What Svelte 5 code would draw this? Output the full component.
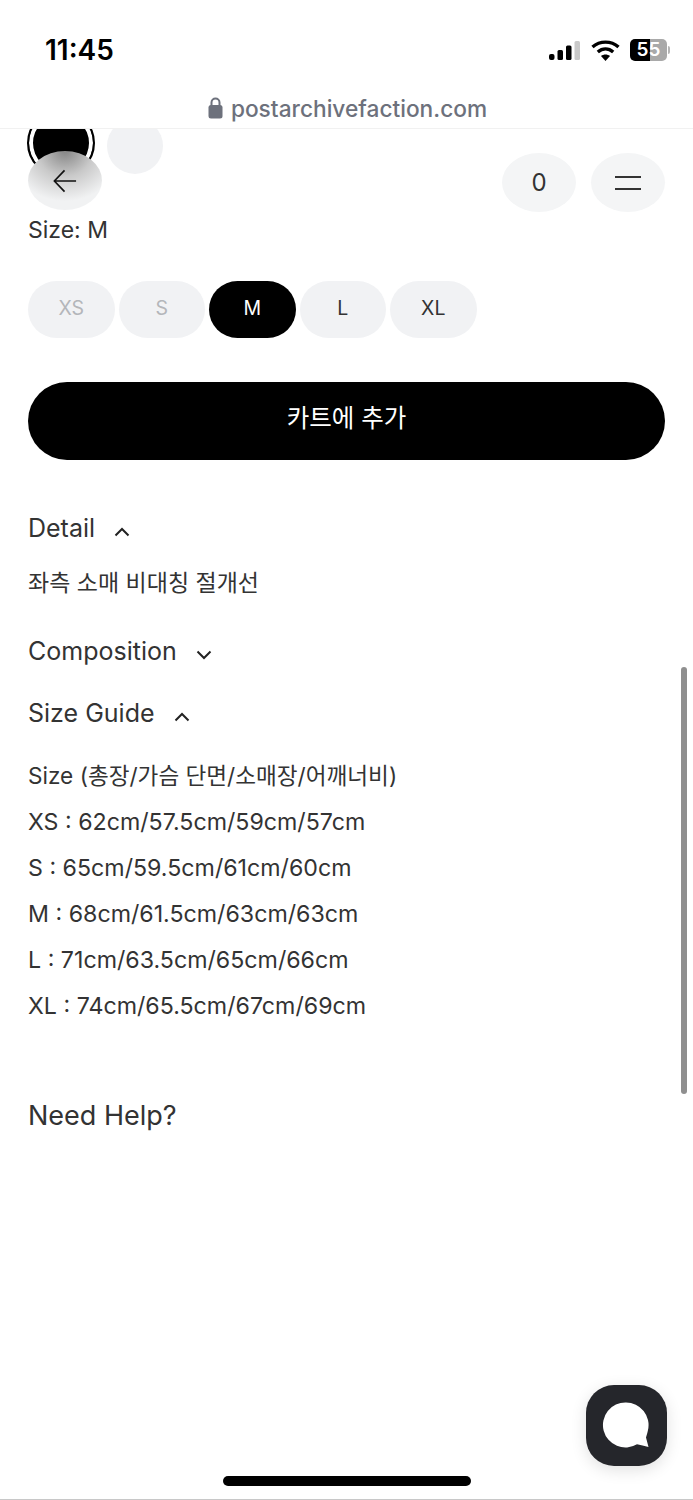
<script>
  const sizes = [
    { label: 'XS', state: 'off' },
    { label: 'S', state: 'off' },
    { label: 'M', state: 'selected' },
    { label: 'L', state: '' },
    { label: 'XL', state: '' }
  ];

  const guide = [
    'Size (총장/가슴 단면/소매장/어깨너비)',
    'XS : 62cm/57.5cm/59cm/57cm',
    'S : 65cm/59.5cm/61cm/60cm',
    'M : 68cm/61.5cm/63cm/63cm',
    'L : 71cm/63.5cm/65cm/66cm',
    'XL : 74cm/65.5cm/67cm/69cm'
  ];
</script>

<div class="screen">
  <div class="status">
    <span class="time">11:45</span>
    <div class="status-icons">
      <svg class="signal" width="32" height="19" viewBox="0 0 32 19">
        <rect x="0" y="13" width="5.500" height="6" rx="2" fill="#000" />
        <rect x="8.500" y="9" width="5.500" height="10" rx="1.500" fill="#000" />
        <rect x="17" y="4.500" width="5.500" height="14.500" rx="1.500" fill="#000" />
        <rect x="25.500" y="0" width="5.500" height="19" rx="1.500" fill="#c9c9c9" />
      </svg>
      <svg class="wifi" width="29" height="21" viewBox="0 0 29 21">
        <path d="M1.500 7C9 .5 20 .5 27.500 7" fill="none" stroke="#000" stroke-width="3.400" />
        <path d="M6.800 12C11.500 8 17.500 8 22.200 12" fill="none" stroke="#000" stroke-width="3.400" />
        <path d="M14.500 21L10 16C12.500 14 16.500 14 19 16Z" fill="#000" />
      </svg>
      <div class="battery">
        55
        <i class="nub"></i>
      </div>
    </div>
  </div>

  <div class="address">
    <svg width="15" height="22" viewBox="0 0 15 22">
      <path d="M3.500 9V5.500a4 4 0 0 1 8 0V9" fill="none" stroke="#6d717c" stroke-width="2" />
      <rect x="0.500" y="8" width="14" height="13.500" rx="2.500" fill="#6d717c" />
    </svg>
    <span>postarchivefaction.com</span>
  </div>

  <main class="page">
    <div class="swatches">
      <span class="swatch black"></span>
      <span class="swatch grey"></span>
    </div>

    <p class="size-label">Size: M</p>

    <div class="sizes">
      {#each sizes as s}
        <button class={s.state}>{s.label}</button>
      {/each}
    </div>

    <button class="cart">카트에 추가</button>

    <section class="detail">
      <h3>Detail <svg class="chev" viewBox="0 0 16 10"><path d="M1.500 8.500L8 2l6.500 6.500" /></svg></h3>
      <p class="kr">좌측 소매 비대칭 절개선</p>
    </section>

    <section class="composition">
      <h3>Composition <svg class="chev" viewBox="0 0 16 10"><path d="M1.500 1.500L8 8l6.500-6.500" /></svg></h3>
    </section>

    <section class="guide">
      <h3>Size Guide <svg class="chev" viewBox="0 0 16 10"><path d="M1.500 8.500L8 2l6.500 6.500" /></svg></h3>
      <div class="guide-lines">
        {#each guide as line}
          <p>{line}</p>
        {/each}
      </div>
    </section>

    <h3 class="help">Need Help?</h3>
  </main>

  <!-- floating header, sits over the page -->
  <button class="round back" aria-label="back">
    <svg width="24" height="24" viewBox="0 0 26 26">
      <path d="M25 13H2M12.500 1.500L1.500 13l11 11.500" fill="none" stroke="#111" stroke-width="1.800" />
    </svg>
  </button>
  <button class="round count">0</button>
  <button class="round menu" aria-label="menu">
    <svg width="26" height="14" viewBox="0 0 26 14">
      <path d="M0 1h26M0 13h26" fill="none" stroke="#333" stroke-width="1.800" />
    </svg>
  </button>

  <i class="scrollbar"></i>

  <div class="chat">
    <svg width="50" height="50" viewBox="0 0 50 50">
      <path d="M24 1.500a22.500 22.500 0 0 1 22 27.500c-.6 3-1.500 5.500-2 7.500l2.500 9.500c-4-1-8-1.800-11.500-2.700A22.500 22.500 0 1 1 24 1.500Z" fill="#fff" />
    </svg>
  </div>

  <i class="home"></i>
  <i class="edge"></i>
</div>

<style>
  :global(body) {
    margin: 0;
    background: #fff;
  }

  .screen {
    position: relative;
    width: 693px;
    height: 1500px;
    overflow: hidden;
    background: #fff;
    font-family: Inter, "Noto Sans CJK KR", sans-serif;
    color: #333;
  }

  .status {
    height: 88px;
    box-sizing: border-box;
    padding: 34px 26px 0 45px;
    display: flex;
    justify-content: space-between;
    align-items: flex-start;
  }

  .time {
    font-size: 28px;
    font-weight: 600;
    line-height: 33px;
    color: #000;
  }

  .status-icons {
    display: flex;
    align-items: center;
    gap: 10px;
    padding-top: 5px;
  }

  .battery {
    position: relative;
    width: 37px;
    height: 22px;
    border-radius: 5px;
    background: linear-gradient(to right, #000 0, #000 20px, #a9a9a9 20px);
    font-weight: 600;
    font-size: 19px;
    line-height: 22px;
    color: #fff;
    text-align: center;
  }

  .nub {
    position: absolute;
    right: -3px;
    top: 7px;
    width: 2px;
    height: 8px;
    background: #b5b5b5;
    border-radius: 0 2px 2px 0;
  }

  .address {
    height: 41px;
    box-sizing: border-box;
    border-bottom: 1px solid #f1f1f1;
    display: flex;
    justify-content: center;
    align-items: flex-start;
    gap: 8px;
    color: #6d717c;
    font-size: 22.700px;
    font-weight: 500;
    line-height: 27px;
    position: relative;
    z-index: 2;
    background: #fff;
    padding-top: 7px;
    padding-left: 2px;
  }

  .address svg {
    margin-top: 2px;
  }

  .page {
    padding: 0 28px;
  }

  .swatches {
    display: flex;
    gap: 12px;
    margin-top: -14px;
    align-items: center;
  }

  .swatch {
    display: block;
    border-radius: 50%;
    box-sizing: border-box;
  }

  .swatch.black {
    width: 68px;
    height: 68px;
    margin-top: -6px;
    margin-left: -1px;
    background: #000;
    border: 2px solid #000;
    box-shadow: inset 0 0 0 4px #fff;
  }

  .swatch.grey {
    width: 56px;
    height: 56px;
    background: #f1f2f4;
  }

  .size-label {
    margin: 38px 0 0;
    font-size: 23px;
    line-height: 30px;
  }

  .sizes {
    display: flex;
    gap: 4px;
    margin-top: 36px;
  }

  .sizes button {
    width: 86.500px;
    height: 57px;
    border: none;
    border-radius: 29px;
    background: #f1f2f4;
    color: #333;
    font: 19.500px Inter, sans-serif;
    padding: 0 0 3px;
  }

  .sizes button.off {
    color: #b4b6ba;
  }

  .sizes button.selected {
    background: #000;
    color: #fff;
  }

  .cart {
    display: block;
    width: 100%;
    height: 78px;
    margin-top: 44px;
    border: none;
    border-radius: 39px;
    background: #000;
    color: #fff;
    font: 24.500px Inter, "Noto Sans CJK KR", sans-serif;
    padding: 0 0 9px;
  }

  h3 {
    margin: 0;
    font-weight: 400;
    font-size: 25px;
    line-height: 32px;
  }

  .chev {
    width: 16px;
    height: 10px;
    margin-left: 12px;
    fill: none;
    stroke: #222;
    stroke-width: 2;
  }

  .detail {
    margin-top: 52px;
  }

  .kr {
    margin: 24px 0 0;
    font-size: 23px;
    line-height: 30px;
  }

  .composition {
    margin-top: 37px;
  }

  .guide {
    margin-top: 30px;
  }

  .guide-lines {
    margin-top: 24px;
  }

  .guide-lines p {
    margin: 0;
    font-size: 23.200px;
    line-height: 46px;
  }

  .guide-lines p:first-child {
    font-size: 22.600px;
  }

  .help {
    margin-top: 71px;
    font-size: 27px;
  }

  .round {
    position: absolute;
    top: 153px;
    width: 74px;
    height: 59px;
    border: none;
    border-radius: 50%;
    background: #f4f5f6;
    padding: 0;
    display: flex;
    align-items: center;
    justify-content: center;
    font: 24px Inter, sans-serif;
    color: #333;
    z-index: 1;
  }

  .back {
    left: 28px;
    top: 151px;
    background: radial-gradient(ellipse 75% 85% at 50% 0%, #858585 0%, #c9c9c9 50%, #f1f2f3 100%);
  }

  .count {
    left: 502px;
  }

  .menu {
    left: 591px;
  }

  .scrollbar {
    position: absolute;
    left: 681px;
    top: 667px;
    width: 6px;
    height: 427px;
    border-radius: 3px;
    background: #8f8f8f;
  }

  .chat {
    position: absolute;
    left: 586px;
    top: 1385px;
    width: 81px;
    height: 81px;
    border-radius: 28px;
    background: #25262b;
    box-shadow: 0 4px 16px rgba(0, 0, 0, 0.12);
    display: flex;
    align-items: center;
    justify-content: center;
  }

  .home {
    position: absolute;
    left: 223px;
    top: 1476px;
    width: 248px;
    height: 10px;
    border-radius: 5px;
    background: #000;
  }

  .edge {
    position: absolute;
    left: 0;
    right: 0;
    bottom: 0;
    height: 1px;
    background: #c8c8c8;
  }
</style>
